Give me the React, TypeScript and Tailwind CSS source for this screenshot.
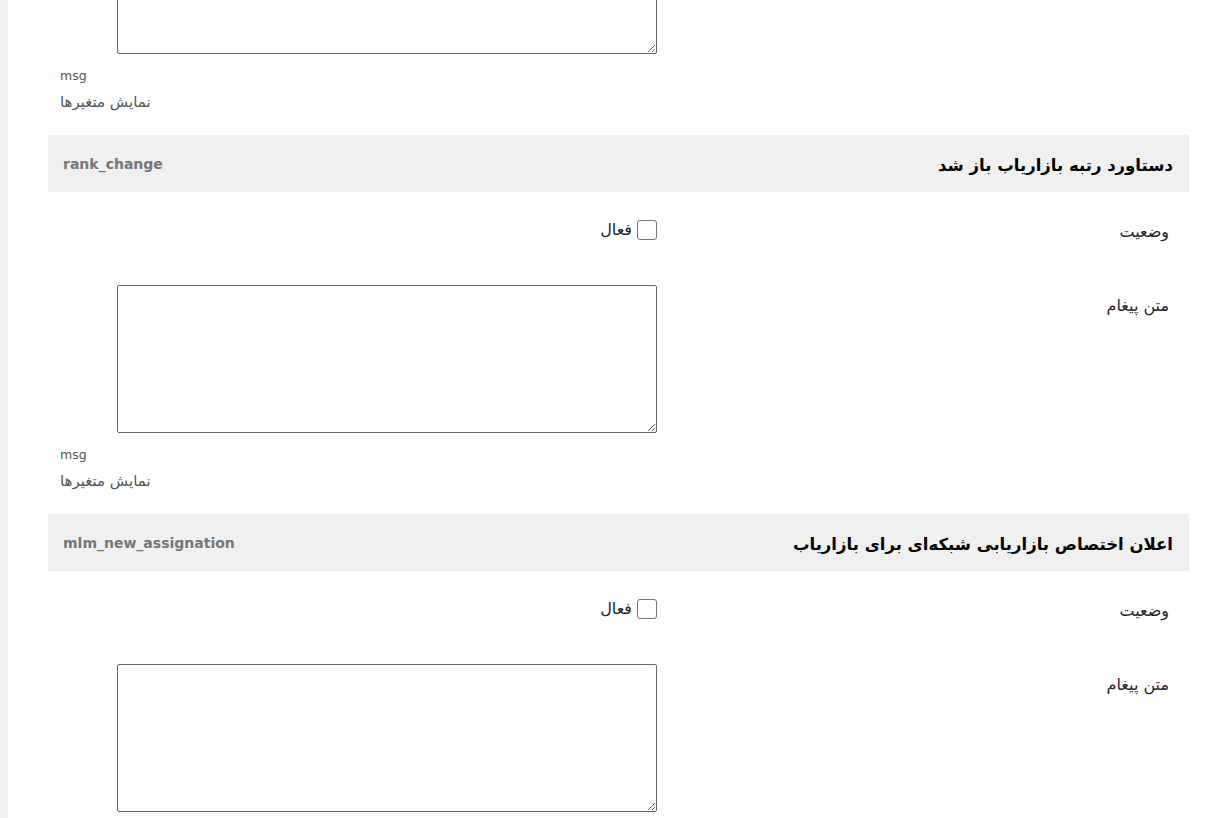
import React from 'react';

interface NotifySection {
  key: string;
  title: string;
}

const sections: NotifySection[] = [
  { key: 'rank_achieved', title: 'دستاورد رتبه جدید بازاریاب' },
  { key: 'rank_change', title: 'دستاورد رتبه بازاریاب باز شد' },
  { key: 'mlm_new_assignation', title: 'اعلان اختصاص بازاریابی شبکه‌ای برای بازاریاب' },
];

const font = { fontFamily: '"DejaVu Sans", Tahoma, sans-serif' };

const SectionBlock: React.FC<{ section: NotifySection }> = ({ section }) => (
  <section>
    <div className="h-[57px] bg-[#f0f0f0] flex items-center justify-between pr-[16px] pl-[15px]">
      <h3 className="text-[16.5px] font-bold text-[#000] pt-[5px]">{section.title}</h3>
      <span dir="ltr" className="text-[14px] font-bold text-[#777] pt-[2px]">
        {section.key}
      </span>
    </div>

    <div className="flex h-[20px] mt-[28px]">
      <div className="w-[532px] shrink-0 pr-[20px] pt-[2px] text-[16px] text-[#1d2327] leading-[20px]">
        وضعیت
      </div>
      <label className="flex items-center gap-[5px] text-[16px] text-[#1d2327] h-[20px]">
        <input
          type="checkbox"
          className="appearance-none w-[20px] h-[20px] border border-[#767676] rounded-[3px] bg-white m-0"
        />
        فعال
      </label>
    </div>

    <div className="flex mt-[45px]">
      <div className="w-[532px] shrink-0 pr-[20px] pt-[11px] text-[16px] text-[#1d2327] leading-[20px]">
        متن پیغام
      </div>
      <textarea
        dir="ltr"
        className="w-[540px] h-[148px] border border-[#666] rounded-[2px] bg-white block"
      />
    </div>

    <div className="pl-[12px] text-left mt-[8px] mb-[19px] text-[#555] leading-[27px]">
      <div dir="ltr" className="text-[12.5px]">
        msg
      </div>
      <div className="text-[15px]">
        <span dir="rtl">نمایش متغیرها</span>
      </div>
    </div>
  </section>
);

const App: React.FC = () => {
  return (
    <div dir="ltr" className="flex h-[818px] overflow-hidden bg-white" style={font}>
      <aside className="w-[8px] shrink-0 bg-[#f0f0f1]" />
      <main dir="rtl" className="flex-1 pl-[40px] pr-[41px]">
        <div className="-mt-[244px]">
          {sections.map((s) => (
            <SectionBlock key={s.key} section={s} />
          ))}
        </div>
      </main>
    </div>
  );
};

export default App;
